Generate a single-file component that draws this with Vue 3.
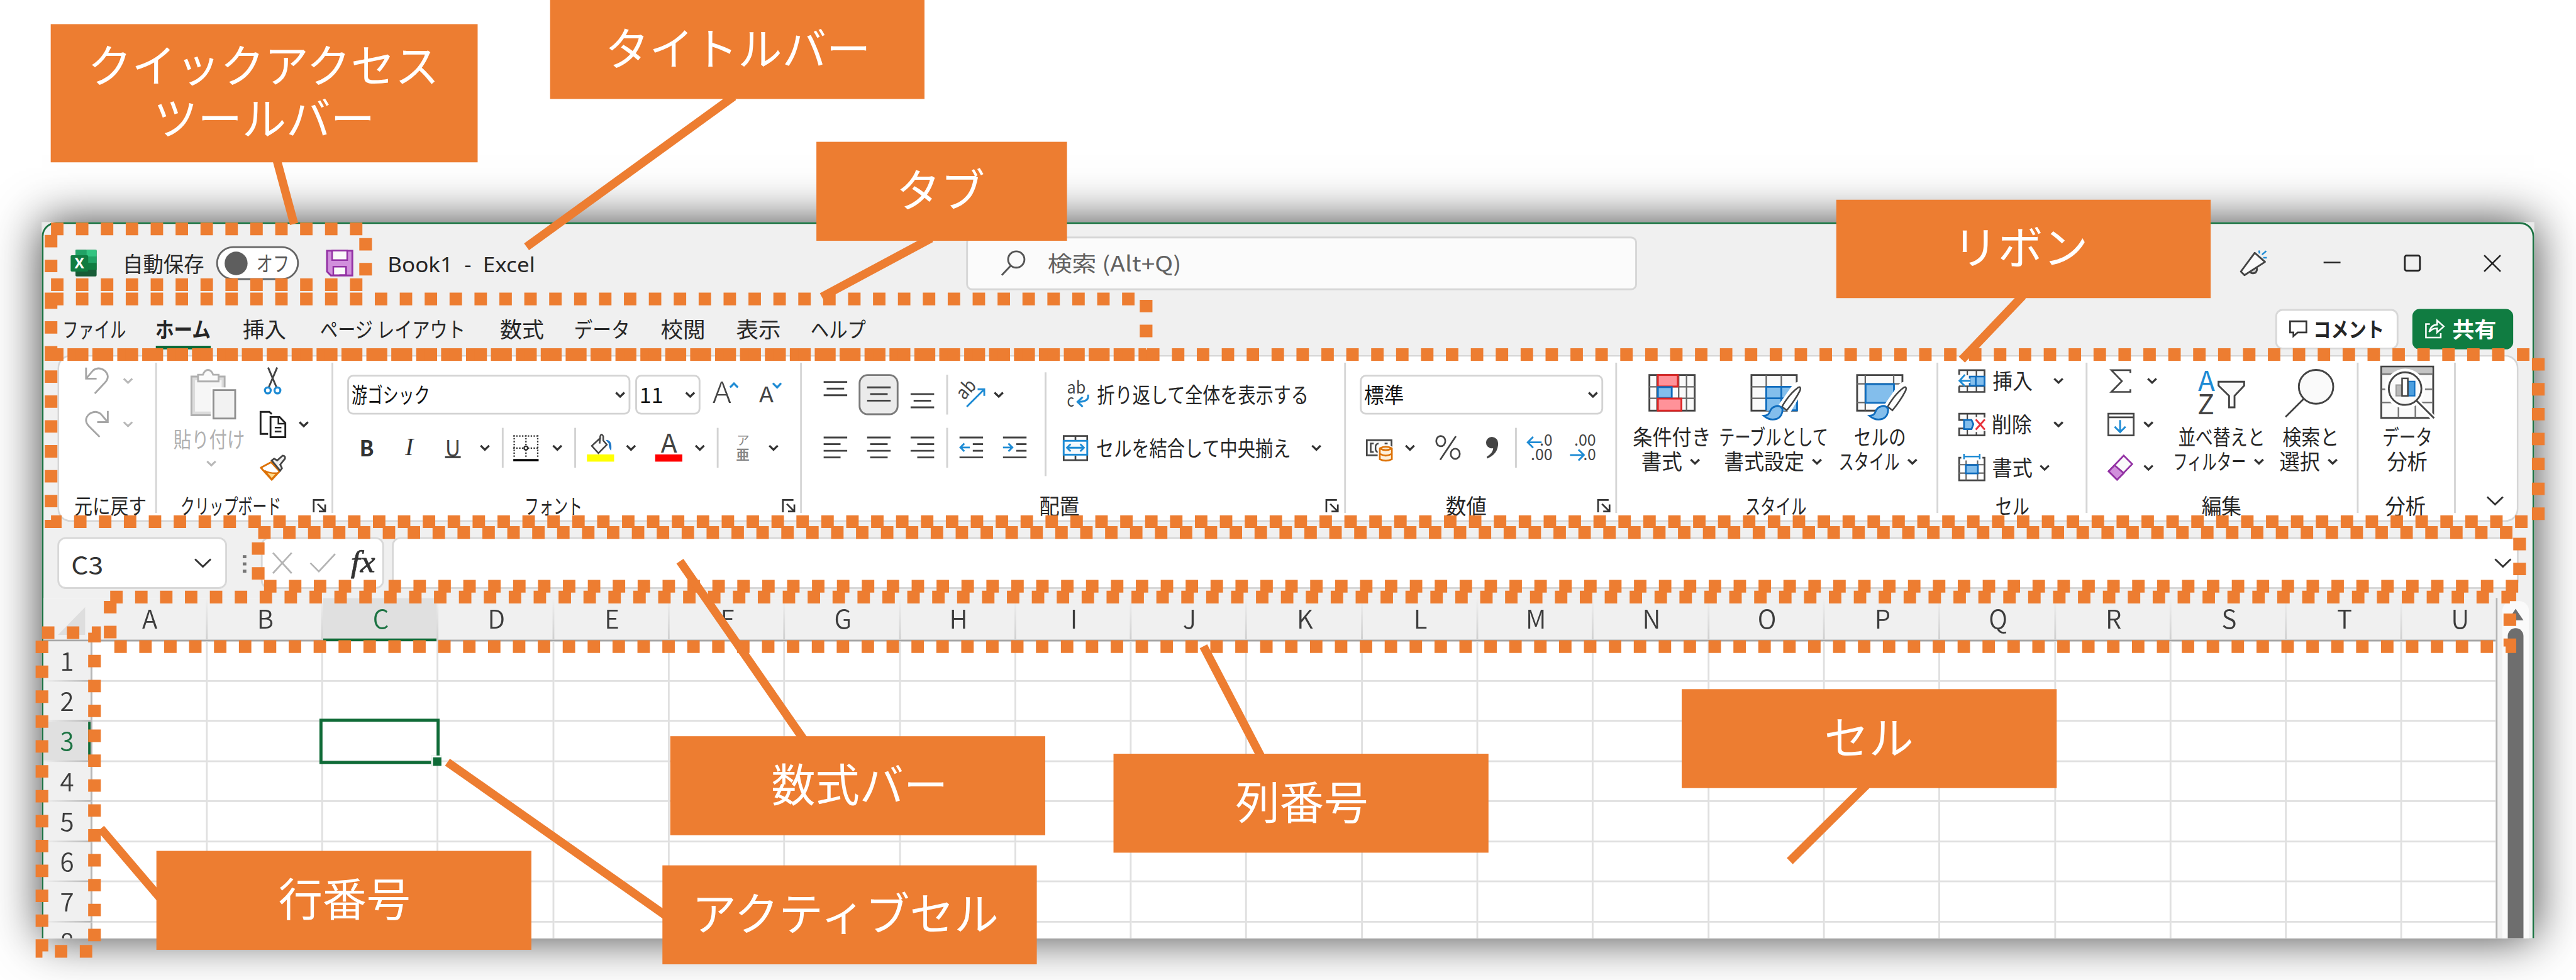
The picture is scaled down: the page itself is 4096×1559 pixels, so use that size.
<script setup>
import { defineComponent, h, onMounted, ref } from 'vue'

const px = (n) => `${n || 0}px`

// A run of text whose visible glyphs span exactly `w` pixels, `g` pixels after its left neighbour.
const Fit = defineComponent({
  props: { w: Number, g: Number },
  setup(props, { slots }) {
    const inner = ref(null)
    onMounted(() => {
      const el = inner.value
      const cs = getComputedStyle(el)
      const ctx = document.createElement('canvas').getContext('2d')
      ctx.font = `${cs.fontStyle} ${cs.fontWeight} ${cs.fontSize} ${cs.fontFamily}`
      const m = ctx.measureText(el.textContent)
      const s = props.w / (m.actualBoundingBoxRight + m.actualBoundingBoxLeft)
      el.style.transform = `translateX(${m.actualBoundingBoxLeft * s}px) scaleX(${s})`
    })
    return () =>
      h('span', { class: 'fit', style: { width: px(props.w), marginLeft: px(props.g) } }, [
        h('span', { class: 'fit-in', ref: inner }, slots.default()),
      ])
  },
})

const K = '#444'
const B = '#1e8bd4'
const brush = `<path d="M73 21C80 14 87 18 82 27L64 58L52 51Z" fill="#fff" stroke="#fff" stroke-width="9"/>
<path d="M79 22Q84 20 82 27Q74 43 60 60L52 54Q64 33 79 22Z" fill="#fff" stroke="${K}" stroke-width="2.6"/>
<path d="M40 54Q48 50 53 58Q53 70 44 74Q32 78 22 69Q30 69 32 62Q35 55 40 54Z" fill="#83beec" stroke="#0f6cbd" stroke-width="3"/>`
const lines = (rows) => rows.map(([a, b, y]) => `<path d="M${a} ${y}H${b}"/>`).join('')
const stroke = (c, w, body) => `<g fill="none" stroke="${c}" stroke-width="${w}">${body}</g>`
const num = (x, y, t, w) => `<text x="${x}" y="${y}" textLength="${w}" lengthAdjust="spacingAndGlyphs" font-size="26" fill="${K}" font-family="Noto Sans CJK JP, sans-serif">${t}</text>`

const icons = {
  excel: [43, 44, `<rect x="8" width="35" height="44" rx="2" fill="#185c37"/><rect x="8" width="18" height="11" fill="#21a366"/><rect x="26" width="17" height="11" fill="#33c481"/><rect x="8" y="11" width="18" height="22" fill="#107c41"/><rect x="26" y="11" width="17" height="11" fill="#21a366"/><rect x="26" y="22" width="17" height="11" fill="#107c41"/><rect y="9" width="29" height="27" rx="2" fill="#107c41"/><text x="14.5" y="31" text-anchor="middle" font-size="24" font-weight="700" fill="#fff" font-family="Open Sans, sans-serif">X</text>`],
  save: [45, 44, `<path d="M1.5 1.5H43.5V42.5H8L1.5 36Z" fill="#d18fdc" stroke="#9332a4" stroke-width="3"/><path d="M10 1.5H35V17H10Z" fill="#fafafa" stroke="#9332a4" stroke-width="2.6"/><path d="M12 42V28H33V42Z" fill="#fafafa" stroke="#9332a4" stroke-width="2.6"/><path d="M33 28V42H22" stroke="#9332a4" stroke-width="2.6" fill="none"/>`],
  search: [40, 42, stroke('#555', 3, '<ellipse cx="25" cy="15" rx="13.5" ry="13.5"/><path d="M16 25L1 41"/>')],
  mega: [44, 44, `<path d="M15 34Q18 41 25 38Q29 34 27 29" fill="#ccc" stroke="${K}" stroke-width="3"/><path d="M24 5L41 20L7 42L1 36Z" fill="#fafafa" stroke="${K}" stroke-width="3" stroke-linejoin="round"/>` + stroke(B, 2.6, '<path d="M31 1L32 6M43 2L36 8M38 13H44"/>')],
  min: [28, 28, stroke('#222', 2.6, '<path d="M0 13H28"/>')],
  max: [28, 28, stroke('#222', 3, '<rect x="1.5" y="1.5" width="25" height="25" rx="3"/>')],
  close: [29, 29, stroke('#222', 2.6, '<path d="M1 1L28 28M28 1L1 28"/>')],
  comment: [30, 28, stroke('#333', 2.8, '<path d="M1.5 1.5H28.5V20H14L7 26V20H1.5Z"/>')],
  share: [33, 32, stroke('#fff', 2.6, '<path d="M8 8H1.5V30.5H26V23"/><path d="M7 21Q10 9 20 9V2L31 12L20 22V15Q12 15 7 21Z"/>')],
  undo: [39, 44, stroke('#a6a6a6', 3, '<path d="M1.5 0V18.5H19"/><path d="M2 18L13 5Q22 -2 32 5Q43 15 32 26L16 43"/>')],
  redo: [39, 44, stroke('#a6a6a6', 3, '<path d="M37.5 0V18.5H20"/><path d="M37 18L26 5Q17 -2 7 5Q-4 15 7 26L24 43"/>')],
  chev: [16, 10, stroke('#333', 3.4, '<path d="M1 1.5L8 8.2L15 1.5"/>')],
  chevg: [16, 10, stroke('#b8b8b8', 3.2, '<path d="M1 1.5L8 8.2L15 1.5"/>')],
  chevL: [28, 16, stroke('#333', 3, '<path d="M1 1.5L14 14L27 1.5"/>')],
  paste: [76, 83, `<path d="M2 12H57V76H2Z" fill="#dcdcdc" stroke="#b0b0b0" stroke-width="3"/><rect x="8" y="18" width="44" height="52" fill="#f6f6f6"/><path d="M13 20V9H21Q24 1 29.500 1Q35 1 38 9H47V20Z" fill="#fafafa" stroke="#b0b0b0" stroke-width="3"/><rect x="34" y="30" width="44" height="55" fill="#fff"/><rect x="38.500" y="34.500" width="36" height="47" fill="#f2f2f2" stroke="#909090" stroke-width="3"/>`],
  cut: [29, 45, stroke(K, 3, '<path d="M7 0L21 33M22 0L8 33"/>') + stroke(B, 3.4, '<ellipse cx="6.500" cy="38" rx="4.800" ry="5"/><ellipse cx="22.500" cy="38" rx="4.800" ry="5"/>')],
  copy: [44, 45, `<path d="M14 38H1.500V1.500H16L20 5" fill="none" stroke="#222" stroke-width="3"/><path d="M18 10H33L42.500 20V43.500H18Z" fill="#fff" stroke="#222" stroke-width="3"/><path d="M31 10V21H42M25 27.500H36M25 34H36" fill="none" stroke="#222" stroke-width="2.600"/>`],
  painter: [44, 43, `<path d="M19 12L2 21L20 41L33 27Z" fill="#fff" stroke="#dd7207" stroke-width="3" stroke-linejoin="round"/><path d="M8 26L20 40L29 30Q18 31 8 26Z" fill="#ffd98a" stroke="#dd7207" stroke-width="2.600"/><path d="M20 9L24 6L29 9L38 1Q43 1 42 6L34 16L37 22L34 26Z" fill="#eee" stroke="${K}" stroke-width="2.800"/>`],
  launch: [22, 22, stroke('#333', 2.8, '<path d="M1.500 22V1.500H19"/><path d="M8 8L20 20M20.500 9V20.500H10"/>')],
  grow: [43, 46, `<text x="0" y="37" textLength="31" lengthAdjust="spacingAndGlyphs" font-size="49" fill="${K}" font-family="Noto Sans CJK JP, sans-serif" font-weight="300">A</text>` + stroke(B, 3.4, '<path d="M29 11L35.500 4.500L42 11"/>')],
  shrink: [37, 46, `<text x="0" y="36" textLength="24" lengthAdjust="spacingAndGlyphs" font-size="36" fill="${K}" font-family="Noto Sans CJK JP, sans-serif">A</text>` + stroke(B, 3.4, '<path d="M23 4L30 11L36.500 4"/>')],
  borders: [42, 43, stroke('#333', 2.4, '<g stroke-dasharray="2.400 2.400"><path d="M0 1.500H42M0 21.500H42M1.500 0V38M21 0V38M40.500 0V38"/></g><path d="M0 41.500H42" stroke="#000" stroke-width="3.600"/><circle cx="21" cy="21.500" r="3" fill="#fff"/>')],
  fill: [45, 46, `<rect y="34" width="45" height="12" fill="#ff0"/><path d="M23 6L8 20L19 32L33 18L27 11V4Q24 -2 22 4L21 16" fill="#fafafa" stroke="#444" stroke-width="2.600"/><path d="M31 10Q43 10 40 28Q36 24 36 16Z" fill="#1e78c8"/>`],
  fcolor: [45, 46, `<rect y="34" width="45" height="12" fill="#f00"/><text x="9.500" y="31" textLength="27" lengthAdjust="spacingAndGlyphs" font-size="42" fill="${K}" font-family="Noto Sans CJK JP, sans-serif">A</text>`],
  asia: [22, 45, `<text x="1" y="18" font-size="21" fill="#888" font-family="Noto Sans CJK JP, sans-serif">ア</text><text x="0" y="42" font-size="22" font-weight="700" fill="#888" font-family="Noto Sans CJK JP, sans-serif">亜</text>`],
  vTop: [39, 46, stroke(K, 3, lines([[0, 39, 2], [5, 34, 13], [0, 39, 24]]))],
  vMid: [39, 46, stroke(K, 3, lines([[0, 39, 11], [5, 34, 22], [0, 39, 33]]))],
  vBot: [39, 46, stroke(K, 3, lines([[0, 39, 22], [5, 34, 33], [0, 39, 44]]))],
  hLeft: [39, 38, stroke(K, 3, lines([[0, 39, 2], [0, 28, 13], [0, 39, 24], [0, 28, 35]]))],
  hMid: [39, 38, stroke(K, 3, lines([[0, 39, 2], [5, 34, 13], [0, 39, 24], [5, 34, 35]]))],
  hRight: [39, 38, stroke(K, 3, lines([[0, 39, 2], [11, 39, 13], [0, 39, 24], [11, 39, 35]]))],
  outdent: [39, 38, stroke(K, 3, lines([[0, 39, 2], [22, 39, 13], [22, 39, 24], [0, 39, 35]])) + stroke(B, 3, '<path d="M17 18.500H2M8 12L1.500 18.500L8 25"/>')],
  indent: [39, 38, stroke(K, 3, lines([[0, 39, 2], [22, 39, 13], [22, 39, 24], [0, 39, 35]])) + stroke(B, 3, '<path d="M0 18.500H15M9 12L15.500 18.500L9 25"/>')],
  orient: [46, 44, `<text transform="translate(11 32) rotate(-48)" font-size="31" fill="${K}" textLength="32" lengthAdjust="spacingAndGlyphs" font-family="Noto Sans CJK JP, sans-serif">ab</text>` + stroke(B, 3, '<path d="M15 42L44 13M33 13H44V24"/>')],
  wrap: [38, 46, `<text x="0" y="21" font-size="28" fill="${K}" textLength="31" lengthAdjust="spacingAndGlyphs" font-family="Noto Sans CJK JP, sans-serif">ab</text><text x="0" y="43" font-size="28" fill="${K}" textLength="12" lengthAdjust="spacingAndGlyphs" font-family="Noto Sans CJK JP, sans-serif">c</text>` + stroke(B, 3.2, '<path d="M35 23V26Q35 35 18 35M26 27L17.500 35L26 43"/>')],
  merge: [42, 43, stroke(K, 2.8, '<rect x="1.500" y="1.500" width="39" height="40"/><path d="M21 1V9M21 34V42"/>') + `<rect x="1.500" y="9.500" width="39" height="23" fill="#f4f9fd" stroke="${B}" stroke-width="3"/>` + stroke(B, 3, '<path d="M7 21H35M13 15L7 21L13 27M29 15L35 21L29 27"/>')],
  money: [45, 46, `<rect x="1.500" y="10.500" width="41" height="25" fill="#fafafa" stroke="${K}" stroke-width="2.800"/>` + stroke(K, 2.6, '<path d="M13 16H8V30H13M21 16Q15 17 16 23Q15 29 21 31M31 16H36"/>') + `<path d="M22 24Q33 18 44 24V42Q33 48 22 42Z" fill="#fbe7c8" stroke="#fff" stroke-width="5"/><path d="M23 24Q33 18.500 43 24V42Q33 47 23 42ZM23 24Q33 30 43 24M23 33Q33 39 43 33" fill="#fdf0dc" stroke="#dd7207" stroke-width="2.800"/>`],
  percent: [42, 42, stroke(K, 2.8, '<ellipse cx="9" cy="10" rx="7.500" ry="8.500"/><ellipse cx="33" cy="31" rx="7.500" ry="8.500"/><path d="M34 2L8 41"/>')],
  comma: [20, 36, `<circle cx="9.500" cy="9.500" r="9.500" fill="${K}"/><path d="M10 1Q20 1 20 11Q20 28 2 36L1 33Q12 27 12 17Z" fill="${K}"/>`],
  inc: [43, 44, num(22, 19, '.0', 21) + num(7, 43, '.00', 36) + stroke(B, 3, '<path d="M25 13H2M11 4L2 13L11 22"/>')],
  dec: [43, 44, num(7, 19, '.00', 36) + num(22, 43, '.0', 21) + stroke(B, 3, '<path d="M0 34H23M14 25L23 34L14 43"/>')],
  cond: [78, 95, stroke(K, 3, '<rect x="1.500" y="21.500" width="75" height="59" fill="#fafafa"/><path d="M1 41H77M1 60H77M14 22V80M50 22V80M63 22V80" stroke="#666" stroke-width="2.400"/>') + '<rect x="15.500" y="21.500" width="33" height="19" fill="#ff9299" stroke="#dc2626" stroke-width="3"/><rect x="15.500" y="41.500" width="23" height="18" fill="#83beec" stroke="#0f6cbd" stroke-width="3"/><rect x="15.500" y="60.500" width="39" height="20" fill="#ff9299" stroke="#dc2626" stroke-width="3"/>'],
  table: [86, 97, stroke(K, 3, '<rect x="1.500" y="21.500" width="75" height="59" fill="#fafafa"/>') + '<rect x="26" y="41" width="51" height="40" fill="#83beec"/>' + stroke('#666', 2.4, '<path d="M1 41H26M1 60H26M26 22V41M51 22V41"/>') + stroke('#0f6cbd', 3, '<path d="M26 80V41H77V80H62M26 60H60M51 41V66"/>') + `<g transform="translate(0 20)">${brush}</g>`],
  cell: [86, 97, stroke(K, 3, '<path d="M76.500 36V21.500H1.500V80.500H40" fill="#fafafa"/>') + stroke('#666', 2.4, '<path d="M1 36H76M1 67H20M15 22V80M62 22V36"/>') + '<rect x="15.500" y="36.500" width="47" height="31" fill="#83beec" stroke="#0f6cbd" stroke-width="3"/>' + `<g transform="translate(0 20)">${brush}</g>`],
  ins: [45, 39, stroke(K, 2.8, '<path d="M1.500 9V1.500H43.500V37.500H1.500V28" fill="#fafafa"/><path d="M15 1V10M30 1V37M15 28V37M1 28H43" stroke-width="2.200"/>') + '<path d="M19 12H43.500V27H19Z" fill="#83beec" stroke="#0f6cbd" stroke-width="2.800"/><path d="M29 12V27" stroke="#0f6cbd" stroke-width="2.800"/><path d="M0 19H20" stroke="#fff" stroke-width="7"/>' + stroke(B, 3, '<path d="M20 19H2M11 9L2 19L11 28"/>')],
  del: [45, 39, stroke(K, 2.8, '<path d="M43.500 8V1.500H1.500V12H9M9 26H1.500V37.500H43.500V30" fill="#fafafa"/><path d="M15 1V11M30 1V7M15 28V37M30 32V37" stroke-width="2.200"/>') + '<path d="M9.500 12H22L25 19L22 27H9.500Z" fill="#83beec" stroke="#0f6cbd" stroke-width="2.800"/>' + stroke('#e8333c', 3, '<path d="M29 11L44 28M44 11L29 28"/>')],
  fmt: [45, 46, stroke(K, 2.8, '<path d="M5 6.500H1.500V44H43.500V6.500H40"/><path d="M1 18H43M1 32H43M13 11V44M32 11V44" stroke-width="2.200" stroke="#666"/>') + '<rect x="12.500" y="18.500" width="20" height="14" fill="#83beec" stroke="#0f6cbd" stroke-width="2.800"/>' + stroke(B, 2.6, '<path d="M9 4.500H36M9.500 0V9M35.500 0V9"/>')],
  sigma: [34, 39, stroke(K, 2.8, '<path d="M33 6V1.500H1.500L19 19.500L1.500 37.500H33V33"/>')],
  down: [45, 39, stroke(K, 2.8, '<rect x="1.500" y="1.500" width="42" height="36"/><path d="M1 7.500H44"/>') + stroke(B, 3, '<path d="M21 12V32M12 23L21 32L30 23"/>')],
  eraser: [43, 44, '<path d="M27 2L41 16L16 42L2 28Z" fill="#fafafa" stroke="#9332a4" stroke-width="2.800"/><path d="M12 18L27 31L16 42L2 28Z" fill="#d18fdc" stroke="#9332a4" stroke-width="2.800"/>'],
  sort: [78, 95, `<text x="0" y="47.500" textLength="28" lengthAdjust="spacingAndGlyphs" font-size="45" fill="${B}" font-family="Noto Sans CJK JP, sans-serif">A</text><text x="-1" y="87" textLength="28" lengthAdjust="spacingAndGlyphs" font-size="45" fill="${K}" font-family="Noto Sans CJK JP, sans-serif">Z</text>` + stroke(K, 3, '<path d="M34 32.500H76.500V39L60.500 56V75H51.500V56L34 39Z" fill="#fafafa"/>')],
  find: [82, 95, stroke(K, 3, '<ellipse cx="51.500" cy="41" rx="28.500" ry="28" fill="#fafafa"/><path d="M31 61L1 91"/>')],
  data: [89, 95, stroke(K, 3, '<rect x="1.500" y="7.500" width="86" height="85" fill="#fafafa"/>') + '<rect x="3" y="9" width="83" height="11" fill="#c4c4c4"/>' + stroke('#777', 2.6, '<path d="M2 20H87M2 45H87M2 67H87M30 68V92M58 68V92"/>') + '<circle cx="41" cy="44" r="33" fill="#fff"/><path d="M60 64L90 95" stroke="#fff" stroke-width="9"/>' + stroke(K, 3, '<ellipse cx="41" cy="44" rx="27" ry="27" fill="#fafafa"/><path d="M60 64L89 93"/>') + '<rect x="26" y="38" width="9" height="18" fill="#b9b9b9" stroke="#999" stroke-width="2"/><rect x="46" y="32" width="11" height="24" fill="#4c9fdf" stroke="#0f6cbd" stroke-width="2"/><rect x="36" y="27" width="9.500" height="29" fill="#fff" stroke="#444" stroke-width="2.600"/>'],
  cancel: [33, 36, stroke('#b4b4b4', 2.8, '<path d="M1 1L32 35M32 1L1 35"/>')],
  check: [43, 32, stroke('#b4b4b4', 2.8, '<path d="M1 16L15 30L42 1"/>')],
}

const Ic = (props) => {
  const [w, hh, body] = icons[props.n]
  return h('svg', { class: 'ic', width: w, height: hh, viewBox: `0 0 ${w} ${hh}`, style: { marginLeft: px(props.g) }, innerHTML: body })
}
Ic.props = ['n', 'g']

const tabs = [
  ['ファイル', 101, 35], ['ホーム', 91, 50], ['挿入', 71, 53], ['ページ レイアウト', 236, 58], ['数式', 71, 62],
  ['データ', 87, 53], ['校閲', 70, 55], ['表示', 71, 55], ['ヘルプ', 90, 53],
]
const columns = 'ABCDEFGHIJKLMNOPQRSTU'.split('')

const frames = [
  [84.5, 379.3, 521, 92.4], [84.5, 495.4, 1813.5, 92.1], [84.5, 587.5, 4119, 277],
  [427.6, 882.5, 3745, 89], [182.5, 989.5, 3974, 82], [69.5, 1048.5, 87, 528],
]
const leads = [
  [457, 260, 487, 371], [1215, 160, 872, 409], [1542, 395, 1361, 492], [3350, 490, 3249, 596], [1126, 930, 1332, 1227],
  [1993, 1071, 2089, 1255], [741, 1263, 1105, 1519], [167, 1373, 265, 1488], [3092, 1300, 2964, 1427],
]
const labels = [
  { x: 84, y: 40, w: 707, h: 229, lines: [['クイックアクセス', 572], ['ツールバー', 353]] },
  { x: 911, y: 0, w: 620, h: 164, lines: [['タイトルバー', 427]] },
  { x: 1352, y: 235, w: 415, h: 164, lines: [['タブ', 139]] },
  { x: 3041, y: 331, w: 620, h: 163, lines: [['リボン', 203]] },
  { x: 1110, y: 1220, w: 621, h: 164, lines: [['数式バー', 284]] },
  { x: 1844, y: 1249, w: 621, h: 164, lines: [['列番号', 216]] },
  { x: 1097, y: 1434, w: 620, h: 164, lines: [['アクティブセル', 504]] },
  { x: 259, y: 1410, w: 621, h: 164, lines: [['行番号', 215]] },
  { x: 2785, y: 1142, w: 621, h: 164, lines: [['セル', 141]] },
]
</script>

<template>
  <div class="viewport">
    <div class="stage">
      <div class="window">
        <div class="frame">
          <header class="titlebar">
            <Ic n="excel" :g="45" />
            <Fit :w="129" :g="48">自動保存</Fit>
            <span class="toggle"><i></i><Fit :w="49" :g="17">オフ</Fit></span>
            <Ic n="save" :g="45" />
            <Fit class="latin" :w="238" :g="60">Book1&nbsp; -&nbsp; Excel</Fit>
            <div class="search">
              <Ic n="search" :g="55" />
              <Fit :w="217" :g="38">検索 (Alt+Q)</Fit>
            </div>
            <Ic n="mega" :g="1000" />
            <Ic n="min" :g="94" />
            <Ic n="max" :g="105" />
            <Ic n="close" :g="104" />
          </header>

          <nav class="tabs">
            <Fit v-for="(t, i) in tabs" :key="t[0]" :class="{ current: i === 1 }" :w="t[1]" :g="t[2]">{{ t[0] }}</Fit>
            <div class="btn comment"><Ic n="comment" :g="20" /><Fit :w="110" :g="14">コメント</Fit></div>
            <div class="btn share"><Ic n="share" :g="21" /><Fit :w="71" :g="13">共有</Fit></div>
          </nav>

          <section class="ribbon">
            <div class="group g1">
              <div class="body rows3">
                <div class="r"><Ic n="undo" :g="46" /><Ic n="chevg" :g="24" /></div>
                <div class="r"><Ic n="redo" :g="46" /><Ic n="chevg" :g="24" /></div>
              </div>
              <div class="cap"><Fit :w="117" :g="29">元に戻す</Fit></div>
            </div>
            <i class="sep"></i>
            <div class="group g2">
              <div class="body">
                <div class="paste">
                  <Ic n="paste" :g="27" />
                  <Fit :w="116">貼り付け</Fit>
                  <Ic n="chevg" :g="54" />
                </div>
                <div class="rows3 clip">
                  <div class="r"><Ic n="cut" :g="7" /></div>
                  <div class="r"><Ic n="copy" /><Ic n="chev" :g="21" /></div>
                  <div class="r"><Ic n="painter" /></div>
                </div>
              </div>
              <div class="cap"><Fit :w="162" :g="41">クリップボード</Fit><Ic n="launch" :g="55" /></div>
            </div>
            <i class="sep"></i>
            <div class="group g3">
              <div class="body rows2">
                <div class="r">
                  <div class="box fontname"><Fit :w="126" :g="5">游ゴシック</Fit><Ic n="chev" /></div>
                  <div class="box fontsize"><Fit :w="35" :g="7">11</Fit><Ic n="chev" /></div>
                  <Ic n="grow" :g="20" /><Ic n="shrink" :g="34" />
                </div>
                <div class="r">
                  <Fit class="bold" :w="20" :g="46">B</Fit>
                  <Fit class="ital" :w="17" :g="52">I</Fit>
                  <Fit class="under" :w="20" :g="53">U</Fit>
                  <Ic n="chev" :g="35" /><i class="bar g20"></i>
                  <Ic n="borders" :g="16" /><Ic n="chev" :g="23" /><i class="bar g20"></i>
                  <Ic n="fill" :g="18" /><Ic n="chev" :g="20" />
                  <Ic n="fcolor" :g="32" /><Ic n="chev" :g="21" /><i class="bar g20"></i>
                  <Ic n="asia" :g="29" /><Ic n="chev" :g="32" />
                </div>
              </div>
              <div class="cap"><Fit :w="89" :g="320">フォント</Fit><Ic n="launch" :g="334" /></div>
            </div>
            <i class="sep"></i>
            <div class="group g4">
              <div class="body">
                <div class="rows2 align">
                  <div class="r">
                    <Ic n="vTop" :g="36" /><div class="pressed"><Ic n="vMid" /></div><Ic n="vBot" :g="20" />
                    <i class="bar g20"></i><Ic n="orient" :g="16" /><Ic n="chev" :g="14" />
                  </div>
                  <div class="r">
                    <Ic n="hLeft" :g="36" /><Ic n="hMid" :g="33" /><Ic n="hRight" :g="33" />
                    <i class="bar g20"></i><Ic n="outdent" :g="19" /><Ic n="indent" :g="33" />
                  </div>
                </div>
                <i class="bar tall"></i>
                <div class="rows2">
                  <div class="r"><Ic n="wrap" :g="34" /><Fit :w="347" :g="12">折り返して全体を表示する</Fit></div>
                  <div class="r"><Ic n="merge" :g="27" /><Fit :w="319" :g="15">セルを結合して中央揃え</Fit><Ic n="chev" :g="36" /></div>
                </div>
              </div>
              <div class="cap"><Fit :w="65" :g="394">配置</Fit><Ic n="launch" :g="408" /></div>
            </div>
            <i class="sep"></i>
            <div class="group g5">
              <div class="body rows2">
                <div class="r"><div class="box numfmt"><Fit :w="64" :g="5">標準</Fit><Ic n="chev" /></div></div>
                <div class="r">
                  <Ic n="money" :g="33" /><Ic n="chev" :g="20" /><Ic n="percent" :g="34" /><Ic n="comma" :g="42" />
                  <i class="bar g28"></i><Ic n="inc" :g="16" /><Ic n="dec" :g="29" />
                </div>
              </div>
              <div class="cap"><Fit :w="66" :g="166">数値</Fit><Ic n="launch" :g="184" /></div>
            </div>
            <i class="sep"></i>
            <div class="group g6">
              <div class="body">
                <div class="big m27">
                  <div class="pic"><Ic n="cond" :g="25" /></div>
                  <div class="ln"><Fit :w="125">条件付き</Fit></div>
                  <div class="ln"><Fit :w="66" :g="14">書式</Fit><Ic n="chev" :g="14" /></div>
                </div>
                <div class="big m19">
                  <div class="pic"><Ic n="table" :g="50" /></div>
                  <div class="ln"><Fit :w="178">テーブルとして</Fit></div>
                  <div class="ln"><Fit :w="131" :g="7">書式設定</Fit><Ic n="chev" :g="14" /></div>
                </div>
                <div class="big m19">
                  <div class="pic"><Ic n="cell" :g="28" /></div>
                  <div class="ln"><Fit :w="82" :g="26">セルの</Fit></div>
                  <div class="ln"><Fit :w="98" :g="1">スタイル</Fit><Ic n="chev" :g="14" /></div>
                </div>
              </div>
              <div class="cap"><Fit :w="99" :g="214">スタイル</Fit></div>
            </div>
            <i class="sep"></i>
            <div class="group g7">
              <div class="body rows3">
                <div class="r"><Ic n="ins" :g="33" /><Fit :w="65" :g="12">挿入</Fit><Ic n="chev" :g="36" /></div>
                <div class="r"><Ic n="del" :g="33" /><Fit :w="65" :g="12">削除</Fit><Ic n="chev" :g="36" /></div>
                <div class="r"><Ic n="fmt" :g="33" /><Fit :w="65" :g="12">書式</Fit><Ic n="chev" :g="13" /></div>
              </div>
              <div class="cap"><Fit :w="54" :g="96">セル</Fit></div>
            </div>
            <i class="sep"></i>
            <div class="group g8">
              <div class="body">
                <div class="rows3 edit">
                  <div class="r"><Ic n="sigma" :g="38" /><Ic n="chev" :g="27" /></div>
                  <div class="r"><Ic n="down" :g="33" /><Ic n="chev" :g="15" /></div>
                  <div class="r"><Ic n="eraser" :g="33" /><Ic n="chev" :g="17" /></div>
                </div>
                <div class="big sorting">
                  <div class="pic"><Ic n="sort" :g="38" /></div>
                  <div class="ln"><Fit :w="139" :g="6">並べ替えと</Fit></div>
                  <div class="ln"><Fit :w="116">フィルター</Fit><Ic n="chev" :g="15" /></div>
                </div>
                <div class="big m27">
                  <div class="pic"><Ic n="find" :g="8" /></div>
                  <div class="ln"><Fit :w="88" :g="5">検索と</Fit></div>
                  <div class="ln"><Fit :w="66">選択</Fit><Ic n="chev" :g="13" /></div>
                </div>
              </div>
              <div class="cap"><Fit :w="65" :g="189">編集</Fit></div>
            </div>
            <i class="sep"></i>
            <div class="group g9">
              <div class="body">
                <div class="big m36">
                  <div class="pic"><Ic n="data" /></div>
                  <div class="ln"><Fit :w="78" :g="5">データ</Fit></div>
                  <div class="ln"><Fit :w="66" :g="11">分析</Fit></div>
                </div>
              </div>
              <div class="cap"><Fit :w="66" :g="44">分析</Fit></div>
            </div>
            <i class="sep"></i>
            <div class="group g10"><Ic n="chevL" :g="51" /></div>
          </section>

          <section class="formula">
            <div class="cellbox namebox"><Fit :w="49" :g="17">C3</Fit><Ic n="chevL" /></div>
            <div class="dots"><i></i><i></i><i></i></div>
            <div class="cellbox fx"><Ic n="cancel" :g="16" /><Ic n="check" :g="29" /><Fit class="fxt" :w="40" :g="25">fx</Fit></div>
            <div class="cellbox input"><Ic n="chevL" /></div>
          </section>

          <section class="sheet">
            <div class="grid">
              <div class="row head">
                <div class="corner"><i></i></div>
                <div v-for="c in columns" :key="c" class="col" :class="{ on: c === 'C' }">{{ c }}</div>
              </div>
              <div v-for="r in 8" :key="r" class="row" :class="{ on: r === 3 }">
                <div class="rownum"><span>{{ r }}</span></div>
                <div v-for="c in columns" :key="c" class="cell">
                  <div v-if="r === 3 && c === 'C'" class="active"><i></i></div>
                </div>
              </div>
            </div>
            <div class="scroll"><i class="tri"></i><i class="thumb"></i></div>
          </section>
        </div>
      </div>

      <svg class="marks" width="4266" height="1624" viewBox="0 0 4266 1624">
        <rect v-for="(f, i) in frames" :key="'f' + i" :x="f[0]" :y="f[1]" :width="f[2]" :height="f[3]" />
        <line v-for="(l, i) in leads" :key="'l' + i" :x1="l[0]" :y1="l[1]" :x2="l[2]" :y2="l[3]" />
      </svg>
      <div
        v-for="b in labels"
        :key="b.x"
        class="label"
        :style="{ left: px(b.x), top: px(b.y), width: px(b.w), height: px(b.h) }"
      >
        <Fit v-for="t in b.lines" :key="t[0]" :w="t[1]">{{ t[0] }}</Fit>
      </div>
    </div>
  </div>
</template>

<style>
body { margin: 0; background: #fff; }
.fit { display: inline-flex; align-items: center; flex: none; line-height: 1; position: relative; top: -2px; }
.fit-in { display: block; flex: none; white-space: nowrap; transform-origin: 0 50%; }
.ic { display: block; flex: none; overflow: visible; }
</style>

<style scoped>
.viewport { width: 4096px; height: 1559px; overflow: hidden; background: #fff; }
.stage {
  position: relative; width: 4266px; height: 1624px; transform: scale(0.96015, 0.95998); transform-origin: 0 0;
  font-family: "Noto Sans CJK JP", sans-serif; font-size: 35px; color: #262626; line-height: 1; overflow: hidden;
}
.stage * { box-sizing: border-box; }
i { display: block; flex: none; font-style: normal; }

.window { position: absolute; left: 69px; top: 368px; width: 4128px; height: 1187px; background: #e9e9e9; box-shadow: 0 0 74px rgba(0, 0, 0, 0.74); }
.frame {
  display: flex; flex-direction: column; height: 100%; overflow: hidden; background: #f0f0f0;
  border: 3px solid #1c7343; border-bottom: 0; border-radius: 24px 24px 0 0;
}

.titlebar { display: flex; align-items: center; height: 120px; padding-top: 10px; flex: none; }
.titlebar > .fit { top: -1px; }
.titlebar > .latin { top: 2px; }
.toggle { display: flex; align-items: center; width: 137px; height: 56px; margin-left: 21px; border: 3px solid #666; border-radius: 28px; background: #fff; color: #555; }
.toggle i { width: 38px; height: 39px; border-radius: 50%; margin-left: 11px; background: #5e5e5e; }
.latin { font-family: "Noto Sans", "Noto Sans CJK JP", sans-serif; font-size: 34px; }
.search { display: flex; align-items: center; width: 1111px; height: 89px; margin: 0 -1px 0 717px; border: 3px solid #d6d6d6; border-radius: 10px; background: #fbfbfb; color: #616161; }

.tabs { display: flex; align-items: center; height: 97px; padding: 11px 32px 0 0; flex: none; font-size: 36px; }
.current { font-weight: 700; }
.current::after { content: ""; position: absolute; left: 0; right: 0; top: 48px; height: 6px; background: #0b6a37; }
.btn { display: flex; align-items: center; height: 67px; border-radius: 12px; font-weight: 700; font-size: 35px; }
.comment { width: 204px; margin-left: auto; background: #fff; border: 3px solid #d8d8d8; }
.share { width: 167px; margin-left: 23px; background: #107c41; color: #fff; }

.ribbon { display: flex; height: 277px; margin: 0 23px; flex: none; border-radius: 22px; background: #fff; box-shadow: inset 0 0 0 3px #d6d6d6; }
.sep { width: 3px; height: 249px; margin-top: 13px; background: #d6d6d6; }
.group { display: flex; flex-direction: column; flex: none; }
.g1 { width: 162px; }
.g2 { width: 289px; }
.g3 { width: 773px; }
.g4 { width: 898px; }
.g5 { width: 446px; }
.g6 { width: 529px; }
.g7 { width: 244px; }
.g8 { width: 446px; }
.g9 { width: 158px; }
.g10 { width: 104px; padding-top: 234px; }
.body { display: flex; height: 231px; }
.body.rows3, .body.rows2 { display: block; }
.rows3 { padding-top: 7px; }
.rows3 .r { height: 72px; }
.rows2 { padding-top: 33px; }
.rows2 .r { height: 66px; margin-bottom: 22px; }
.r, .cap, .ln { display: flex; align-items: center; }
.cap { height: 38px; }
.paste { width: 116px; margin-left: 28px; padding-top: 24px; color: #b0b0b0; }
.paste .fit { display: flex; height: 36px; margin: 15px 0 17px; }
.clip { margin-left: 26px; }
.box { display: flex; align-items: center; justify-content: space-between; height: 66px; padding-right: 6px; border: 3px solid #d3d3d3; border-radius: 10px; background: #fff; color: #111; }
.fontname { width: 469px; margin-left: 23px; }
.fontsize { width: 108px; margin-left: 8px; }
.numfmt { width: 403px; margin-left: 23px; }
.bold { font-weight: 700; font-size: 37px; color: #333; }
.ital { font-family: "Liberation Serif", serif; font-style: italic; font-size: 41px; color: #333; }
.under { font-size: 37px; color: #444; }
.under::after { content: ""; position: absolute; left: -3px; right: -3px; bottom: 0; height: 3px; background: #333; }
.bar { width: 3px; height: 66px; background: #d3d3d3; }
.bar.g20 { margin-left: 20px; }
.bar.g28 { margin-left: 28px; }
.bar.tall { height: 172px; margin-top: 29px; }
.align { width: 402px; }
.pressed { display: flex; align-items: center; justify-content: center; width: 66px; height: 68px; margin-left: 19px; border: 3px solid #7a7a7a; border-radius: 15px; background: #ebebeb; }
.big { padding-top: 12px; flex: none; }
.pic { height: 103px; }
.ln { height: 41px; }
.m19 { margin-left: 19px; }
.m27 { margin-left: 27px; }
.m36 { margin-left: 36px; }
.edit { width: 115px; }
.sorting { margin-left: 30px; }

.formula { display: flex; height: 86px; margin: 25px 23px 0; flex: none; }
.cellbox { display: flex; align-items: center; border: 3px solid #d8d8d8; border-radius: 14px; background: #fff; flex: none; }
.namebox { width: 281px; justify-content: space-between; padding: 0 23px 0 5px; font-size: 41px; color: #333; }
.namebox .fit { top: 1px; }
.dots { display: flex; flex-direction: column; gap: 7px; width: 6px; margin: 30px 24px 0 26px; }
.dots i { width: 6px; height: 5px; background: #777; }
.fx { width: 204px; }
.fxt { font-family: "Liberation Serif", serif; font-style: italic; font-weight: 400; font-size: 50px; color: #333; -webkit-text-stroke: 0.8px #333; }
.input { width: 3522px; margin-left: 13px; justify-content: flex-end; padding-right: 9px; }

.sheet { display: flex; margin-top: 15px; flex: none; height: 564px; }
.grid { width: 4064px; overflow: hidden; border-right: 3px solid #b4b4b4; background: #fff; flex: none; }
.row { display: flex; width: 4200px; height: 66.5px; }
.head { height: 72px; background: #f0f0f0; border-bottom: 3px solid #a6a6a6; }
.corner { width: 80.500px; padding: 15px 0 0 24px; flex: none; }
.corner i { border-left: 45px solid transparent; border-bottom: 46px solid #dedede; width: 0; height: 0; }
.col, .cell { position: relative; width: 191.3px; flex: none; border-right: 3px solid #e0e0e0; }
.col { display: flex; align-items: center; justify-content: center; padding: 0 0 3px 3px; font-size: 42px; font-weight: 350; color: #3c3c3c; border-image: linear-gradient(#f0f0f0, #cfcfcf) 1; }
.col.on { background: #e0e0e0; color: #1c7343; box-shadow: inset 0 -5px #0f6b37; height: 72px; padding-bottom: 6px; }
.cell { border-bottom: 3px solid #e0e0e0; }
.rownum { width: 80.500px; flex: none; display: flex; align-items: center; padding: 0 0 3px 26px; font-size: 42px; font-weight: 350; color: #3c3c3c; background: #f0f0f0; border-right: 3px solid #a6a6a6; border-bottom: 3px solid; border-image: linear-gradient(90deg, #f0f0f0, #b6b6b6) 1; }
.rownum span { width: 26px; text-align: center; display: flex; justify-content: center; }
.row.on .rownum { background: #e0e0e0; color: #1c7343; box-shadow: inset -4px 0 #0f6b37; }
.active { position: absolute; left: -6px; top: -5px; width: 199px; height: 75px; border: 5px solid #0f6b37; z-index: 1; }
.active i { position: absolute; right: -8px; bottom: -8px; width: 17px; height: 17px; background: #0f6b37; border: solid #fff; border-width: 3px 0 0 3px; }
.scroll { width: 44px; margin: 5px 0 0 8px; padding: 13px 9px 0; background: #fafafa; border-radius: 16px 16px 0 0; display: flex; flex-direction: column; }
.tri { border: solid transparent; border-width: 0 13px 19px; border-bottom-color: #6e6e6e; }
.thumb { flex: 1; margin-top: 13px; background: #6e6e6e; border-radius: 13px 13px 0 0; }

.marks { position: absolute; left: 0; top: 0; fill: none; stroke: #ed7d31; }
.marks rect { stroke-width: 21; stroke-dasharray: 20.625 20.625; }
.marks line { stroke-width: 14; }
.label { position: absolute; display: flex; flex-direction: column; align-items: center; justify-content: center; gap: 14px; padding-bottom: 9px; background: #ed7d31; color: #fff; font-size: 74px; font-weight: 400; }
</style>
